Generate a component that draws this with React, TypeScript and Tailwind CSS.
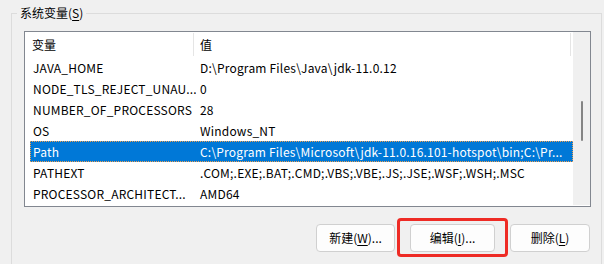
import React from 'react';

interface EnvVar {
  name: string;
  value: string;
}

const rows: EnvVar[] = [
  { name: 'JAVA_HOME', value: 'D:\\Program Files\\Java\\jdk-11.0.12' },
  { name: 'NODE_TLS_REJECT_UNAU...', value: '0' },
  { name: 'NUMBER_OF_PROCESSORS', value: '28' },
  { name: 'OS', value: 'Windows_NT' },
  { name: 'Path', value: 'C:\\Program Files\\Microsoft\\jdk-11.0.16.101-hotspot\\bin;C:\\Pr...' },
  { name: 'PATHEXT', value: '.COM;.EXE;.BAT;.CMD;.VBS;.VBE;.JS;.JSE;.WSF;.WSH;.MSC' },
  { name: 'PROCESSOR_ARCHITECT...', value: 'AMD64' },
];

const selected = 'Path';

function Mnemonic({ before, letter, after }: { before: string; letter: string; after: string }) {
  return (
    <span>
      {before}
      <span className="underline underline-offset-2">{letter}</span>
      {after}
    </span>
  );
}

export default function App() {
  return (
    <div className="w-[604px] h-[264px] overflow-hidden bg-[#f0f0f0] text-[12px] text-black font-['Noto_Sans_CJK_SC',sans-serif]">
      <fieldset className="ml-[11px] mt-[5px] w-[591px] h-[290px] border border-[#dcdcdc] p-0 m-0">
        <legend className="ml-[5px] px-[3px] leading-[16px]">
          <Mnemonic before="系统变量(" letter="S" after=")" />
        </legend>

        {/* list view */}
        <div className="mt-[10px] ml-[12px] w-[567px] h-[176px] border border-[#828790] bg-white flex">
          <div className="w-[548px] flex flex-col">
            <div className="h-[25px] flex items-stretch">
              <div className="w-[169px] pl-[7px] pt-[1px] flex items-center border-r border-[#e5e5e5] my-[1px]">变量</div>
              <div className="w-[377px] pl-[6px] pt-[1px] flex items-center border-r border-[#e5e5e5] my-[1px]">值</div>
            </div>
            {rows.map((row) => {
              const isSel = row.name === selected;
              return (
                <div
                  key={row.name}
                  className={`ml-[5px] h-[21px] leading-[19px] flex whitespace-nowrap overflow-hidden border border-dotted tracking-[0.2px] ${
                    isSel ? 'bg-[#0078d7] text-white border-[#f0a050]' : 'border-transparent'
                  }`}
                >
                  <div className="w-[165px] pl-[2px] overflow-hidden">{row.name}</div>
                  <div className="flex-1 pl-[4px] overflow-hidden">{row.value}</div>
                </div>
              );
            })}
          </div>
          {/* scrollbar */}
          <div className="w-[17px] h-[173px] bg-[#f0f0f0] flex justify-center">
            <div className="mt-[69px] w-[2px] h-[40px] bg-[#858585] rounded-full" />
          </div>
        </div>

        {/* buttons */}
        <div className="mt-[17px] mr-[11px] flex justify-end gap-[15px]">
          <button className="w-[79px] h-[28px] rounded-[4px] border border-[#d0d0d0] bg-[#fdfdfd]">
            <Mnemonic before="新建(" letter="W" after=")..." />
          </button>
          <div className="relative">
            <button className="w-[85px] h-[28px] rounded-[4px] border border-[#d0d0d0] bg-[#fdfdfd]">
              <Mnemonic before="编辑(" letter="I" after=")..." />
            </button>
            <div className="absolute left-[-13px] top-[-6px] w-[111px] h-[39px] rounded-[4px] border-[3px] border-[#ee2b25]" />
          </div>
          <button className="w-[80px] h-[28px] rounded-[4px] border border-[#d0d0d0] bg-[#fdfdfd]">
            <Mnemonic before="删除(" letter="L" after=")" />
          </button>
        </div>
      </fieldset>
    </div>
  );
}
